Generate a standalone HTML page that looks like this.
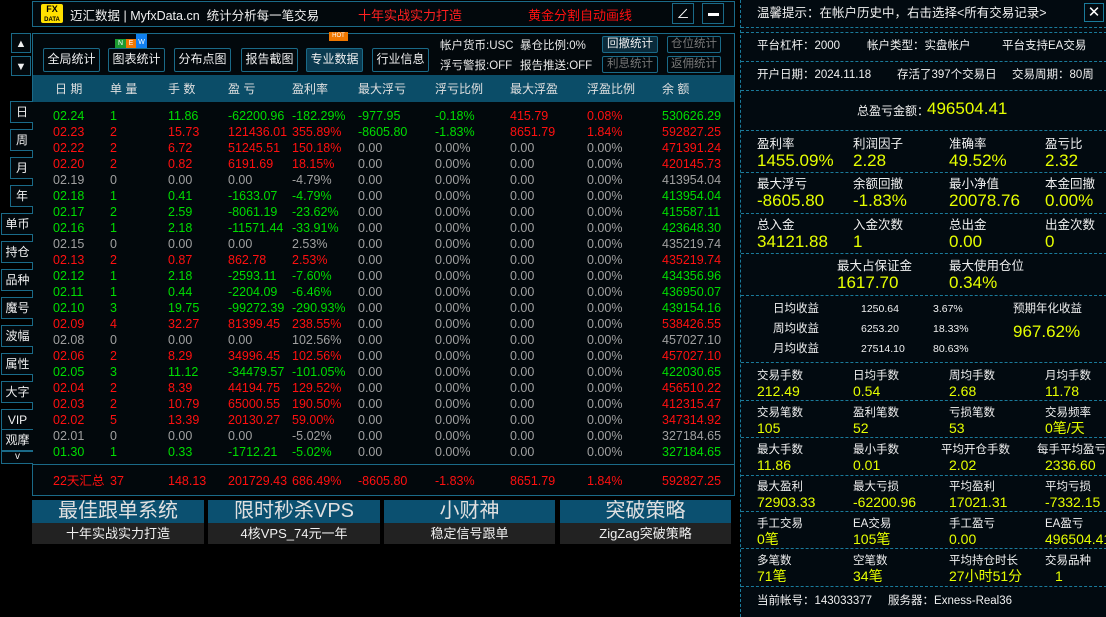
<!DOCTYPE html>
<html><head><meta charset="utf-8"><style>
*{margin:0;padding:0;box-sizing:border-box}
body{width:1106px;height:617px;background:#000;position:relative;overflow:hidden;font-family:"Liberation Sans","Noto Sans CJK SC",sans-serif;color:#e8e8e8;font-size:12px}
.a{position:absolute;white-space:nowrap}
.btn{position:absolute;border:1px solid #1a6a88;border-radius:2px;background:#02080c;color:#f0f0f0;font-size:12px;text-align:center;line-height:21px;white-space:nowrap}
.sb{position:absolute;border:1px solid #1a6a88;border-right:none;background:#02080c;color:#f0f0f0;font-size:12px;text-align:center;line-height:20px}
.g{color:#00dd00}.r{color:#ff1010}.w{color:#a0a0a0}
.row{position:absolute;left:0;height:16px;font-size:12.5px;line-height:16px;white-space:nowrap}
.row span{position:absolute;white-space:nowrap}
.rp{position:absolute;left:740px;top:0;width:366px;height:617px;background:#020a10;border-left:1px dashed #1a7a9a}
.hl{position:absolute;left:0;width:366px;border-top:1px dashed #1a7a9a}
.lb{position:absolute;font-size:12.5px;line-height:14px;color:#f0f0f0;white-space:nowrap}
.vl{position:absolute;font-size:17px;line-height:18px;color:#e6ff00;white-space:nowrap}
.ban{position:absolute;top:500px;width:172px;height:44px}
.ban .t{height:23px;background:#0b5070;color:#e0e0e0;font-size:20px;text-align:center;line-height:23px}
.ban .b{height:21px;background:#222;color:#f0f0f0;font-size:13px;text-align:center;line-height:21px}
</style></head><body>
<!-- top bar -->
<div class="a" style="left:32px;top:1px;width:703px;height:26px;border:1px solid #1a6a88;background:#02080c"></div>
<div class="a" style="left:41px;top:4px;width:22px;height:19px;background:#ffe000;border-radius:2px;color:#000;font-size:9px;font-weight:bold;line-height:9px;text-align:center;padding-top:1px">FX<br><span style="font-size:6px">DATA</span></div>
<div class="a" style="left:70px;top:5px;font-size:12.5px;color:#f0f0f0">迈汇数据 | MyfxData.cn&nbsp;&nbsp;统计分析每一笔交易</div>
<div class="a" style="left:358px;top:5px;font-size:13px;color:#ff2020">十年实战实力打造</div>
<div class="a" style="left:528px;top:5px;font-size:13px;color:#ff1010">黄金分割自动画线</div>
<div class="a" style="left:672px;top:3px;width:22px;height:21px;border:1px solid #1a6a88;color:#fff;font-size:13px;text-align:center;line-height:19px">∠</div>
<div class="a" style="left:702px;top:3px;width:22px;height:21px;border:1px solid #1a6a88;"><div style="position:absolute;left:5px;top:9px;width:11px;height:3px;background:#fff"></div></div>
<!-- arrows -->
<div class="sb" style="left:11px;top:33px;width:20px;height:20px;border-right:1px solid #1a6a88;font-size:11px">▲</div>
<div class="sb" style="left:11px;top:56px;width:20px;height:20px;border-right:1px solid #1a6a88;font-size:11px">▼</div>
<!-- main panel -->
<div class="a" style="left:32px;top:33px;width:703px;height:463px;border:1px solid #1a6a88;background:#02080c"></div>
<div class="a" style="left:33px;top:75px;width:701px;height:27px;background:#0b4d68"></div>
<div class="a" style="left:33px;top:464px;width:701px;border-top:1px solid #1a6a88"></div>
<!-- toolbar -->
<div class="btn" style="left:43px;top:48px;width:57px;height:24px">全局统计</div>
<div class="btn" style="left:108px;top:48px;width:57px;height:24px">图表统计</div>
<div class="btn" style="left:174px;top:48px;width:57px;height:24px">分布点图</div>
<div class="btn" style="left:241px;top:48px;width:57px;height:24px">报告截图</div>
<div class="btn" style="left:306px;top:48px;width:57px;height:24px;background:#0a3a50">专业数据</div>
<div class="btn" style="left:372px;top:48px;width:57px;height:24px">行业信息</div>
<div class="a" style="left:115px;top:39px;width:11px;height:9px;background:#1a9a30;color:#fff;font-size:7px;text-align:center;line-height:9px">N</div>
<div class="a" style="left:126px;top:39px;width:10px;height:9px;background:#f07800;color:#fff;font-size:7px;text-align:center;line-height:9px">E</div>
<div class="a" style="left:136px;top:34px;width:11px;height:14px;background:#1080f0;color:#fff;font-size:7px;text-align:center;line-height:18px">W</div>
<div class="a" style="left:329px;top:32px;width:19px;height:9px;background:#f07800;color:#fff;font-size:6px;text-align:center;line-height:9px">HOT</div>
<div class="a" style="left:440px;top:37px;font-size:11.5px">帐户货币:USC</div>
<div class="a" style="left:520px;top:37px;font-size:11.5px">暴仓比例:0%</div>
<div class="a" style="left:440px;top:57px;font-size:11.5px">浮亏警报:OFF</div>
<div class="a" style="left:520px;top:57px;font-size:11.5px">报告推送:OFF</div>
<div class="btn" style="left:602px;top:36px;width:56px;height:17px;line-height:15px;font-size:11.5px;background:#0a2a3a">回撤统计</div>
<div class="btn" style="left:667px;top:36px;width:54px;height:17px;line-height:15px;font-size:11.5px;color:#777">仓位统计</div>
<div class="btn" style="left:602px;top:56px;width:56px;height:17px;line-height:15px;font-size:11.5px;color:#777">利息统计</div>
<div class="btn" style="left:667px;top:56px;width:54px;height:17px;line-height:15px;font-size:11.5px;color:#777">返佣统计</div>
<!-- header -->
<div class="row" style="top:81px;color:#e0e0e0;font-size:12px">
<span style="left:55px">日 期</span><span style="left:110px">单 量</span><span style="left:168px">手 数</span><span style="left:228px">盈 亏</span><span style="left:292px">盈利率</span><span style="left:358px">最大浮亏</span><span style="left:435px">浮亏比例</span><span style="left:510px">最大浮盈</span><span style="left:587px">浮盈比例</span><span style="left:662px">余 额</span></div>
<div id="rows"></div>
<!-- side buttons -->
<div class="sb" style="left:10px;top:101px;width:23px;height:22px">日</div>
<div class="sb" style="left:10px;top:129px;width:23px;height:22px">周</div>
<div class="sb" style="left:10px;top:157px;width:23px;height:22px">月</div>
<div class="sb" style="left:10px;top:185px;width:23px;height:22px">年</div>
<div class="sb" style="left:1px;top:213px;width:32px;height:22px">单币</div>
<div class="sb" style="left:1px;top:241px;width:32px;height:22px">持仓</div>
<div class="sb" style="left:1px;top:269px;width:32px;height:22px">品种</div>
<div class="sb" style="left:1px;top:297px;width:32px;height:22px">魔号</div>
<div class="sb" style="left:1px;top:325px;width:32px;height:22px">波幅</div>
<div class="sb" style="left:1px;top:353px;width:32px;height:22px">属性</div>
<div class="sb" style="left:1px;top:381px;width:32px;height:22px">大字</div>
<div class="sb" style="left:1px;top:409px;width:32px;height:22px">VIP</div>
<div class="sb" style="left:1px;top:429px;width:32px;height:22px">观摩</div>
<div class="sb" style="left:1px;top:451px;width:32px;height:13px;line-height:10px;font-size:10px">v</div>
<!-- banners -->
<div class="ban" style="left:32px"><div class="t">最佳跟单系统</div><div class="b">十年实战实力打造</div></div>
<div class="ban" style="left:208px"><div class="t">限时秒杀VPS</div><div class="b">4核VPS_74元一年</div></div>
<div class="ban" style="left:384px;width:171px"><div class="t">小财神</div><div class="b">稳定信号跟单</div></div>
<div class="ban" style="left:560px;width:171px"><div class="t">突破策略</div><div class="b">ZigZag突破策略</div></div>
<!-- right panel -->
<div class="rp">
<div class="lb" style="left:16px;top:6px">温馨提示：在帐户历史中，右击选择&lt;所有交易记录&gt;</div>
<div class="a" style="left:343px;top:3px;width:20px;height:19px;border:1px solid #1a7a9a;color:#fff;font-size:15px;text-align:center;line-height:17px">✕</div>
<div class="hl" style="top:27px"></div><div class="hl" style="top:32px"></div>
<div class="lb" style="left:16px;top:39px;font-size:11.5px">平台杠杆：2000</div>
<div class="lb" style="left:126px;top:39px;font-size:11.5px">帐户类型：实盘帐户</div>
<div class="lb" style="left:261px;top:39px;font-size:11.5px">平台支持EA交易</div>
<div class="hl" style="top:61px"></div>
<div class="lb" style="left:16px;top:68px;font-size:11.5px">开户日期：2024.11.18</div>
<div class="lb" style="left:156px;top:68px;font-size:11.5px">存活了397个交易日</div>
<div class="lb" style="left:271px;top:68px;font-size:11.5px">交易周期：80周</div>
<div class="hl" style="top:90px"></div>
<div class="lb" style="left:116px;top:104px;font-size:12px">总盈亏金额：</div>
<div class="vl" style="left:186px;top:100px;font-size:17px">496504.41</div>
<div class="hl" style="top:130px"></div>
<div class="lb" style="left:16px;top:137px">盈利率</div><div class="lb" style="left:112px;top:137px">利润因子</div><div class="lb" style="left:208px;top:137px">准确率</div><div class="lb" style="left:304px;top:137px">盈亏比</div>
<div class="vl" style="left:16px;top:152px">1455.09%</div><div class="vl" style="left:112px;top:152px">2.28</div><div class="vl" style="left:208px;top:152px">49.52%</div><div class="vl" style="left:304px;top:152px">2.32</div>
<div class="hl" style="top:172px"></div>
<div class="lb" style="left:16px;top:177px">最大浮亏</div><div class="lb" style="left:112px;top:177px">余额回撤</div><div class="lb" style="left:208px;top:177px">最小净值</div><div class="lb" style="left:304px;top:177px">本金回撤</div>
<div class="vl" style="left:16px;top:192px">-8605.80</div><div class="vl" style="left:112px;top:192px">-1.83%</div><div class="vl" style="left:208px;top:192px">20078.76</div><div class="vl" style="left:304px;top:192px">0.00%</div>
<div class="hl" style="top:213px"></div>
<div class="lb" style="left:16px;top:218px">总入金</div><div class="lb" style="left:112px;top:218px">入金次数</div><div class="lb" style="left:208px;top:218px">总出金</div><div class="lb" style="left:304px;top:218px">出金次数</div>
<div class="vl" style="left:16px;top:233px">34121.88</div><div class="vl" style="left:112px;top:233px">1</div><div class="vl" style="left:208px;top:233px">0.00</div><div class="vl" style="left:304px;top:233px">0</div>
<div class="hl" style="top:253px"></div>
<div class="lb" style="left:96px;top:259px">最大占保证金</div><div class="lb" style="left:208px;top:259px">最大使用仓位</div>
<div class="vl" style="left:96px;top:274px">1617.70</div><div class="vl" style="left:208px;top:274px">0.34%</div>
<div class="hl" style="top:295px"></div>
<div class="lb" style="left:32px;top:302px;font-size:11.5px">日均收益</div><div class="lb" style="left:120px;top:302px;font-size:10.5px">1250.64</div><div class="lb" style="left:192px;top:302px;font-size:10.5px">3.67%</div>
<div class="lb" style="left:32px;top:322px;font-size:11.5px">周均收益</div><div class="lb" style="left:120px;top:322px;font-size:10.5px">6253.20</div><div class="lb" style="left:192px;top:322px;font-size:10.5px">18.33%</div>
<div class="lb" style="left:32px;top:342px;font-size:11.5px">月均收益</div><div class="lb" style="left:120px;top:342px;font-size:10.5px">27514.10</div><div class="lb" style="left:192px;top:342px;font-size:10.5px">80.63%</div>
<div class="lb" style="left:272px;top:302px;font-size:11.5px">预期年化收益</div>
<div class="vl" style="left:272px;top:323px;font-size:17px">967.62%</div>
<div class="hl" style="top:362px"></div>
<div class="lb" style="left:16px;top:369px;font-size:11.5px">交易手数</div><div class="lb" style="left:112px;top:369px;font-size:11.5px">日均手数</div><div class="lb" style="left:208px;top:369px;font-size:11.5px">周均手数</div><div class="lb" style="left:304px;top:369px;font-size:11.5px">月均手数</div>
<div class="vl" style="left:16px;top:383px;font-size:14px;line-height:16px">212.49</div><div class="vl" style="left:112px;top:383px;font-size:14px;line-height:16px">0.54</div><div class="vl" style="left:208px;top:383px;font-size:14px;line-height:16px">2.68</div><div class="vl" style="left:304px;top:383px;font-size:14px;line-height:16px">11.78</div>
<div class="hl" style="top:400px"></div>
<div class="lb" style="left:16px;top:406px;font-size:11.5px">交易笔数</div><div class="lb" style="left:112px;top:406px;font-size:11.5px">盈利笔数</div><div class="lb" style="left:208px;top:406px;font-size:11.5px">亏损笔数</div><div class="lb" style="left:304px;top:406px;font-size:11.5px">交易频率</div>
<div class="vl" style="left:16px;top:420px;font-size:14px;line-height:16px">105</div><div class="vl" style="left:112px;top:420px;font-size:14px;line-height:16px">52</div><div class="vl" style="left:208px;top:420px;font-size:14px;line-height:16px">53</div><div class="vl" style="left:304px;top:420px;font-size:14px;line-height:16px">0笔/天</div>
<div class="hl" style="top:437px"></div>
<div class="lb" style="left:16px;top:443px;font-size:11.5px">最大手数</div><div class="lb" style="left:112px;top:443px;font-size:11.5px">最小手数</div><div class="lb" style="left:200px;top:443px;font-size:11.5px">平均开仓手数</div><div class="lb" style="left:296px;top:443px;font-size:11.5px">每手平均盈亏</div>
<div class="vl" style="left:16px;top:457px;font-size:14px;line-height:16px">11.86</div><div class="vl" style="left:112px;top:457px;font-size:14px;line-height:16px">0.01</div><div class="vl" style="left:208px;top:457px;font-size:14px;line-height:16px">2.02</div><div class="vl" style="left:304px;top:457px;font-size:14px;line-height:16px">2336.60</div>
<div class="hl" style="top:475px"></div>
<div class="lb" style="left:16px;top:480px;font-size:11.5px">最大盈利</div><div class="lb" style="left:112px;top:480px;font-size:11.5px">最大亏损</div><div class="lb" style="left:208px;top:480px;font-size:11.5px">平均盈利</div><div class="lb" style="left:304px;top:480px;font-size:11.5px">平均亏损</div>
<div class="vl" style="left:16px;top:494px;font-size:14px;line-height:16px">72903.33</div><div class="vl" style="left:112px;top:494px;font-size:14px;line-height:16px">-62200.96</div><div class="vl" style="left:208px;top:494px;font-size:14px;line-height:16px">17021.31</div><div class="vl" style="left:304px;top:494px;font-size:14px;line-height:16px">-7332.15</div>
<div class="hl" style="top:511px"></div>
<div class="lb" style="left:16px;top:517px;font-size:11.5px">手工交易</div><div class="lb" style="left:112px;top:517px;font-size:11.5px">EA交易</div><div class="lb" style="left:208px;top:517px;font-size:11.5px">手工盈亏</div><div class="lb" style="left:304px;top:517px;font-size:11.5px">EA盈亏</div>
<div class="vl" style="left:16px;top:531px;font-size:14px;line-height:16px">0笔</div><div class="vl" style="left:112px;top:531px;font-size:14px;line-height:16px">105笔</div><div class="vl" style="left:208px;top:531px;font-size:14px;line-height:16px">0.00</div><div class="vl" style="left:304px;top:531px;font-size:14px;line-height:16px">496504.41</div>
<div class="hl" style="top:548px"></div>
<div class="lb" style="left:16px;top:554px;font-size:11.5px">多笔数</div><div class="lb" style="left:112px;top:554px;font-size:11.5px">空笔数</div><div class="lb" style="left:208px;top:554px;font-size:11.5px">平均持仓时长</div><div class="lb" style="left:304px;top:554px;font-size:11.5px">交易品种</div>
<div class="vl" style="left:16px;top:568px;font-size:14px;line-height:16px">71笔</div><div class="vl" style="left:112px;top:568px;font-size:14px;line-height:16px">34笔</div><div class="vl" style="left:208px;top:568px;font-size:14px;line-height:16px">27小时51分</div><div class="vl" style="left:314px;top:568px;font-size:14px;line-height:16px">1</div>
<div class="hl" style="top:586px"></div>
<div class="lb" style="left:16px;top:594px;font-size:11.5px">当前帐号：143033377&nbsp;&nbsp;&nbsp;&nbsp; 服务器：Exness-Real36</div>
</div>
<div class="row r" style="top:473px"><span style="left:53px">22天汇总</span><span style="left:110px">37</span><span style="left:168px">148.13</span><span style="left:228px">201729.43</span><span style="left:292px">686.49%</span><span style="left:358px">-8605.80</span><span style="left:435px">-1.83%</span><span style="left:510px">8651.79</span><span style="left:587px">1.84%</span><span style="left:662px">592827.25</span></div>
<script>
var D=[
"g|02.24|1|11.86|-62200.96|-182.29%|g-977.95|g-0.18%|r415.79|r0.08%|g530626.29",
"r|02.23|2|15.73|121436.01|355.89%|g-8605.80|g-1.83%|r8651.79|r1.84%|r592827.25",
"r|02.22|2|6.72|51245.51|150.18%|r471391.24",
"r|02.20|2|0.82|6191.69|18.15%|r420145.73",
"w|02.19|0|0.00|0.00|-4.79%|w413954.04",
"g|02.18|1|0.41|-1633.07|-4.79%|g413954.04",
"g|02.17|2|2.59|-8061.19|-23.62%|g415587.11",
"g|02.16|1|2.18|-11571.44|-33.91%|g423648.30",
"w|02.15|0|0.00|0.00|2.53%|w435219.74",
"r|02.13|2|0.87|862.78|2.53%|r435219.74",
"g|02.12|1|2.18|-2593.11|-7.60%|g434356.96",
"g|02.11|1|0.44|-2204.09|-6.46%|g436950.07",
"g|02.10|3|19.75|-99272.39|-290.93%|g439154.16",
"r|02.09|4|32.27|81399.45|238.55%|r538426.55",
"w|02.08|0|0.00|0.00|102.56%|w457027.10",
"r|02.06|2|8.29|34996.45|102.56%|r457027.10",
"g|02.05|3|11.12|-34479.57|-101.05%|g422030.65",
"r|02.04|2|8.39|44194.75|129.52%|r456510.22",
"r|02.03|2|10.79|65000.55|190.50%|r412315.47",
"r|02.02|5|13.39|20130.27|59.00%|r347314.92",
"w|02.01|0|0.00|0.00|-5.02%|w327184.65",
"g|01.30|1|0.33|-1712.21|-5.02%|g327184.65"];
var X=[53,110,168,228,292,358,435,510,587,662],h="";
D.forEach(function(s,i){var p=s.split("|"),c=p[0],v=p.slice(1),cells;
if(v.length==10){cells=v.map(function(t,j){return j<5?[c,t]:[t[0],t.slice(1)]});}
else{cells=v.slice(0,5).map(function(t){return[c,t]});cells.push(["w","0.00"],["w","0.00%"],["w","0.00"],["w","0.00%"],[v[5][0],v[5].slice(1)]);}
h+='<div class="row" style="top:'+(108+i*16)+'px">';
cells.forEach(function(q,j){h+='<span class="'+q[0]+'" style="left:'+X[j]+'px">'+q[1]+'</span>'});h+='</div>';});
document.getElementById("rows").innerHTML=h;
</script>
</body></html>
